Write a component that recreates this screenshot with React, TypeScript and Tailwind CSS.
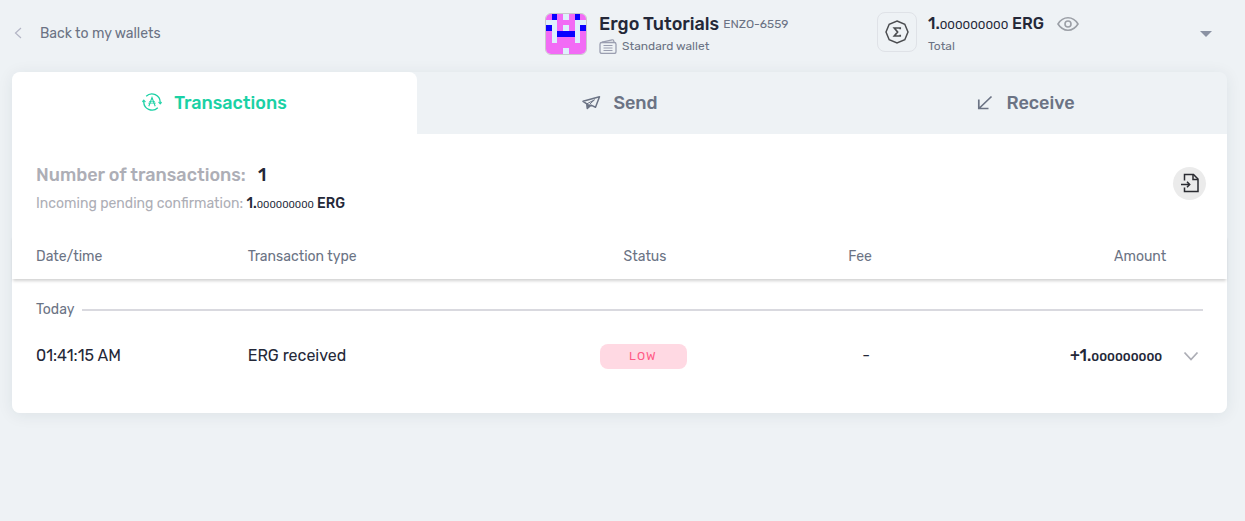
import type { ReactNode } from 'react';
import clsx from 'clsx';

type IconProps = { className?: string };

const AVATAR_ROWS = ['pbplpbp', 'llpppll', 'blplplb', 'plbbblp', 'plppplp', 'ppppppp', 'ppplppp'];

const AVATAR_COLORS: Record<string, string> = {
  p: '#f26bf5',
  b: '#0a00ff',
  l: '#dff0fc',
};

function WalletAvatar() {
  return (
    <svg
      viewBox="0 0 7 7"
      shapeRendering="crispEdges"
      aria-hidden="true"
      className="size-[42px] shrink-0 rounded-md border border-[#c9c8cc]"
    >
      {AVATAR_ROWS.map((row, y) =>
        row.split('').map((cell, x) => (
          <rect key={`${x}-${y}`} x={x} y={y} width="1" height="1" fill={AVATAR_COLORS[cell]} />
        ))
      )}
    </svg>
  );
}

function BackIcon() {
  return (
    <svg viewBox="0 0 8 12" className="mb-0.5 h-3 w-2" fill="none" stroke="#b3b5c5" strokeWidth="1.2" aria-hidden="true">
      <path d="M7 1 1.5 6 7 11" />
    </svg>
  );
}

function WalletIcon() {
  return (
    <svg viewBox="0 0 18 15" className="h-[15px] w-[18px]" fill="none" stroke="#9a9eb0" strokeLinejoin="round" aria-hidden="true">
      <rect x="1" y="3.5" width="16" height="11" rx="1.8" strokeWidth="1.3" />
      <path d="M3 3.2 13.2.8c.8-.2 1.3.2 1.5 1l.4 1.6" strokeWidth="1.2" />
      <path d="M4.5 6.5h9M4.5 9h9M4.5 11.5h9" strokeWidth="1" />
    </svg>
  );
}

function ErgoIcon() {
  return (
    <svg viewBox="0 0 24 24" className="size-6" fill="none" stroke="#4b4d50" aria-hidden="true">
      <path d="M12 1 19.8 4.2 23 12 19.8 19.8 12 23 4.2 19.8 1 12 4.2 4.2Z" strokeWidth="1.5" />
      <path d="M15.2 9.2V8H9.3L12.6 12 9.3 16h5.9v-1.2" strokeWidth="1.7" />
    </svg>
  );
}

function EyeIcon() {
  return (
    <svg viewBox="0 0 22 14" className="h-3.5 w-[22px]" fill="none" stroke="#9b9fa6" strokeWidth="1.6" aria-hidden="true">
      <path d="M1 7C3.6 2.8 7 .8 11 .8S18.4 2.8 21 7c-2.6 4.2-6 6.2-10 6.2S3.6 11.2 1 7Z" />
      <circle cx="11" cy="7" r="3" />
    </svg>
  );
}

function TransactionsIcon({ className }: IconProps) {
  return (
    <svg viewBox="0 0 20 20" className={className} fill="none" stroke="currentColor" strokeWidth="1.3" aria-hidden="true">
      <path d="M4.2 4.2A8.3 8.3 0 0 1 18.2 10.4M15.8 15.8A8.3 8.3 0 0 1 1.8 9.4" />
      <path d="M16.2 10.2h4l-2 2.2ZM3.8 9.8h-4l2-2.2Z" fill="currentColor" strokeWidth=".3" />
      <path d="M6.8 14.2 10 5.500l3.2 8.7" strokeWidth="1.1" />
      <path d="M7 9.6h6M6.2 11.2h7.6" strokeWidth=".7" />
    </svg>
  );
}

function SendIcon({ className }: IconProps) {
  return (
    <svg viewBox="0 0 20 20" className={className} fill="none" stroke="currentColor" strokeWidth="1.5" strokeLinejoin="round" aria-hidden="true">
      <path d="M2 8.3 18.5 3.7l-4 10.5-4.5-2.1-3.7 3.4-.5-4.6Z" />
      <path d="M5.8 10.9 13.5 6.8 8.5 11.4" strokeWidth="1" />
      <path d="m5.9 11.2.4 4.300L9.5 12.5l-1.7-.9Z" fill="currentColor" strokeWidth=".6" />
    </svg>
  );
}

function ReceiveIcon({ className }: IconProps) {
  return (
    <svg viewBox="0 0 20 20" className={className} fill="none" stroke="currentColor" strokeWidth="1.7" aria-hidden="true">
      <path d="M17.5 3.5 5.5 15M4.8 6.5v9h9.7" />
    </svg>
  );
}

function ExportIcon() {
  return (
    <svg viewBox="0 0 20 20" className="size-5" fill="none" stroke="#2b2c32" strokeWidth="1.5" aria-hidden="true">
      <path d="M4.5 7.5v-6h9L18 6v12.5H4.5v-4" />
      <path d="M13 1.5v5h5" />
      <path d="M1 11.5h8.5M7 8.8l2.7 2.7L7 14.2" />
    </svg>
  );
}

function ExpandIcon() {
  return (
    <svg viewBox="0 0 16 10" className="h-2.5 w-4" fill="none" stroke="#adaeb6" strokeWidth="1.8" aria-hidden="true">
      <path d="m1.5 1.5 6.5 7 6.5-7" />
    </svg>
  );
}

function Tab({ active, icon, children }: { active?: boolean; icon: ReactNode; children: ReactNode }) {
  return (
    <button
      type="button"
      role="tab"
      aria-selected={!!active}
      className={clsx(
        'flex items-center justify-center gap-3 py-[17px] text-lg font-medium',
        active ? 'rounded-t-lg bg-white text-[#1ad1a5]' : 'text-[#6b7384]'
      )}
    >
      {icon}
      {children}
    </button>
  );
}

function Header() {
  return (
    <header className="grid grid-cols-[533fr_332fr_350fr] items-center py-3">
      <a href="#wallets" className="flex items-center gap-[18px] pl-0.5 text-sm text-[#6b7384]">
        <BackIcon />
        Back to my wallets
      </a>

      <div className="flex items-center gap-3">
        <WalletAvatar />
        <div>
          <div className="flex items-center gap-1">
            <h1 className="text-lg leading-6 font-medium text-[#242838]">Ergo Tutorials</h1>
            <span className="text-xs text-[#6b7384]">ENZO-6559</span>
          </div>
          <div className="flex items-center gap-[5px] text-xs leading-5 text-[#6b7384]">
            <WalletIcon />
            Standard wallet
          </div>
        </div>
      </div>

      <div className="flex items-center">
        <div className="mb-1 flex size-10 items-center justify-center rounded-lg border border-[#dfe2e7]">
          <ErgoIcon />
        </div>
        <div className="ml-[11px]">
          <div className="flex items-center gap-[13px]">
            <p className="text-base leading-6 font-medium text-[#242838]">
              1.<span className="text-xs font-normal">000000000</span> ERG
            </p>
            <button type="button" aria-label="Hide balance">
              <EyeIcon />
            </button>
          </div>
          <p className="text-xs leading-5 text-[#6b7384]">Total</p>
        </div>
        <button type="button" aria-label="Switch wallet" className="mr-[15px] ml-auto">
          <svg viewBox="0 0 12 6" className="h-1.5 w-3" fill="#8a92a3" aria-hidden="true">
            <path d="M0 0h12L6 6Z" />
          </svg>
        </button>
      </div>
    </header>
  );
}

function TransactionsTable() {
  return (
    <table className="w-full table-fixed border-separate border-spacing-0 text-left">
      <colgroup>
        <col className="w-[19.4%]" />
        <col className="w-[24%]" />
        <col className="w-[17.4%]" />
        <col className="w-[19%]" />
        <col className="w-[15.2%]" />
        <col className="w-[5%]" />
      </colgroup>
      <thead className="text-sm text-[#6b7384] shadow-[0_3px_3px_-1px_rgba(0,0,0,0.18)]">
        <tr className="h-11">
          <th className="pl-6 font-normal">Date/time</th>
          <th className="font-normal">Transaction type</th>
          <th className="text-center font-normal">Status</th>
          <th className="pr-3 text-center font-normal">Fee</th>
          <th className="text-right font-normal">Amount</th>
          <th aria-label="Details" />
        </tr>
      </thead>
      <tbody className="text-base text-[#242838]">
        <tr className="h-[61px]">
          <td colSpan={6} className="px-6">
            <div className="flex items-center gap-2 text-sm text-[#6b7384]">
              Today
              <div className="h-0.5 grow bg-[#d9d9df]" />
            </div>
          </td>
        </tr>
        <tr className="h-8">
          <td className="pl-6">01:41:15 AM</td>
          <td>ERG received</td>
          <td className="pr-1">
            <span className="mx-auto block w-[87px] rounded-lg bg-[#ffd9e3] text-center text-xs leading-[25px] tracking-widest text-[#ff5c87]">
              LOW
            </span>
          </td>
          <td className="text-center">-</td>
          <td className="pr-1 text-right font-medium">
            +1.<span className="text-xs">000000000</span>
          </td>
          <td className="pl-[17px]">
            <button type="button" aria-label="Show details" className="block">
              <ExpandIcon />
            </button>
          </td>
        </tr>
      </tbody>
    </table>
  );
}

export default function App() {
  return (
    <div className="min-h-screen bg-[#eef2f5] pr-[18px] pl-3 font-[Rubik,Roboto,sans-serif]">
      <Header />

      <main className="mt-1 rounded-lg shadow-[0_2px_16px_rgba(30,50,70,0.08)]">
        <div role="tablist" className="grid grid-cols-3 rounded-t-lg">
          <Tab active icon={<TransactionsIcon className="mt-[-2px] size-5" />}>
            Transactions
          </Tab>
          <Tab icon={<SendIcon className="size-5" />}>Send</Tab>
          <Tab icon={<ReceiveIcon className="size-5" />}>Receive</Tab>
        </div>

        <section className="rounded-b-lg bg-white pb-[41px]">
          <div className="flex items-center justify-between pt-[27px] pr-[21px] pb-[15px] pl-6">
            <div>
              <h2 className="text-lg leading-7 font-medium text-[#adaeb6]">
                Number of transactions: <span className="ml-2 text-[#242838]">1</span>
              </h2>
              <p className="text-sm leading-[30px] text-[#adaeb6]">
                Incoming pending confirmation:{' '}
                <span className="font-medium text-[#242838]">
                  1.<span className="text-[10px] font-normal">000000000</span> ERG
                </span>
              </p>
            </div>
            <button
              type="button"
              aria-label="Export transactions"
              className="mb-[15px] flex size-[33px] items-center justify-center rounded-full bg-[#ebebeb]"
            >
              <ExportIcon />
            </button>
          </div>
          <TransactionsTable />
        </section>
      </main>
    </div>
  );
}
